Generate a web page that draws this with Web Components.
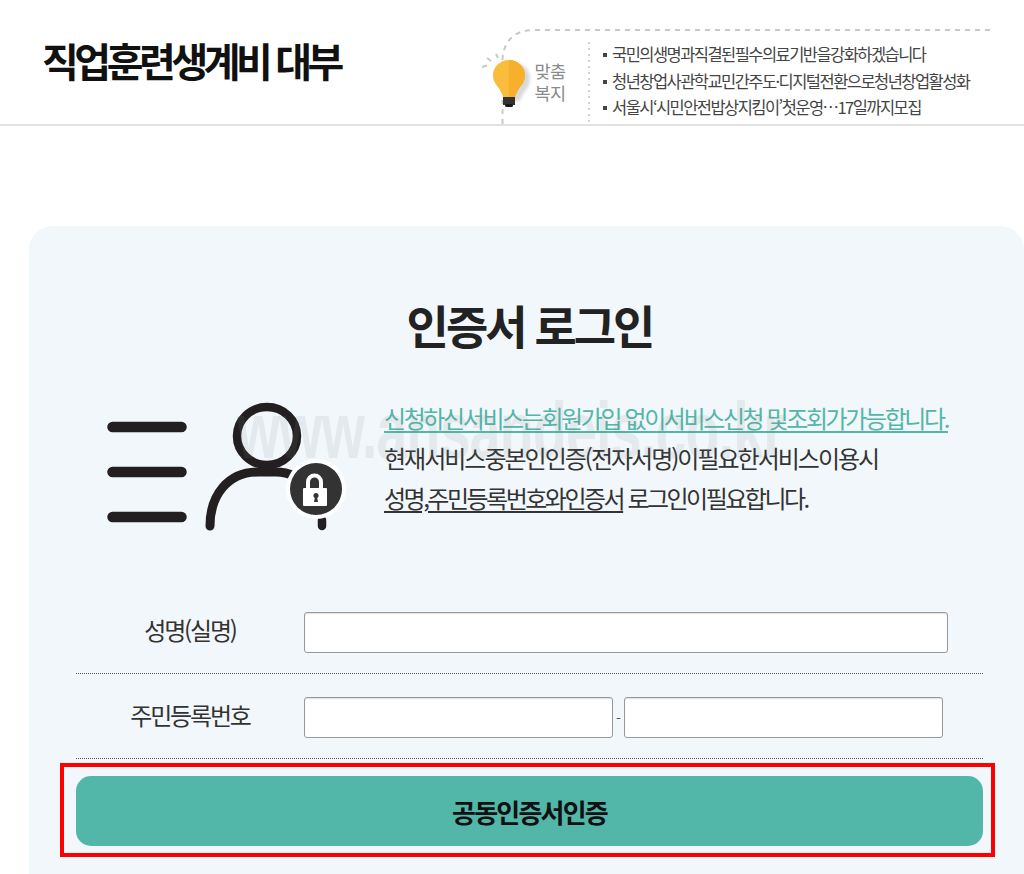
<!DOCTYPE html>
<html lang="ko"><head><meta charset="utf-8"><title>인증서 로그인</title>
<style>
html,body{margin:0;padding:0;background:#fff}
body{font-family:"Noto Sans CJK KR","Noto Sans",sans-serif;color:#222;height:874px;overflow:hidden}
</style></head><body>
<site-header>
  <promo-list slot="promo">
    <li>국민의생명과직결된필수의료기반을강화하겠습니다</li>
    <li>청년창업사관학교민간주도·디지털전환으로청년창업활성화</li>
    <li>서울시‘시민안전밥상지킴이’첫운영…17일까지모집</li>
  </promo-list>
</site-header>
<login-card></login-card>
<script>
const def=(name,html)=>customElements.define(name,class extends HTMLElement{
  constructor(){super();this.attachShadow({mode:'open'}).innerHTML=html}
});
def('site-header',`<style>
:host{display:flex;height:124px;border-bottom:2px solid #e2e2e2;overflow:hidden}
h1{margin:0;padding:34px 0 0 42px;width:478px;flex:none;box-sizing:border-box;font-size:40px;line-height:52px;font-weight:700;letter-spacing:-4.45px;color:#111;white-space:nowrap}
.slot{flex:1;display:flex}
</style><h1>직업훈련생계비 대부</h1><div class="slot"><slot name="promo"></slot></div>`);
def('promo-list',`<style>
:host{display:flex;flex:1;position:relative;align-items:flex-start}
svg{display:block;position:absolute;left:0;top:0}
.lab{margin:60px 0 0 55px;width:34px;flex:none;text-align:center;font-size:17.5px;line-height:22px;color:#8a8a8a;letter-spacing:-.6px;position:relative}
.list{margin:41px 0 0 36px;padding:0;font-size:16.5px;line-height:26.5px;letter-spacing:-1.55px;color:#444;white-space:nowrap;position:relative}
::slotted(li){list-style:none;padding-left:9px;position:relative}
::slotted(li)::before{content:"";position:absolute;left:0;top:12px;width:4px;height:4px;background:#444}
</style>
<svg width="546" height="124" viewBox="0 0 546 124" fill="none">
<defs><filter id="b" x="-30%" y="-30%" width="160%" height="160%"><feGaussianBlur stdDeviation="1.5"/></filter></defs>
<path d="M24.500 124V100M24.500 60C25 44 34 30 56 30H512" stroke="#c9c9c9" stroke-width="2" stroke-dasharray="5 5"/>
<path d="M111 42V124" stroke="#d2d2d2" stroke-width="2" stroke-dasharray="2 4"/>
<path d="M4 67l5-1.500M9 58l4 3M18 54l2 4" stroke="#c8c8c8" stroke-width="2"/>
<path d="M35 62c-9 0-16 6-16 15 0 5 2 9 5 12 2 3 4 6 5 10h10c1-4 3-7 5-10 3-3 5-7 5-12 0-9-5-15-14-15z" fill="#bbb" opacity=".55" filter="url(#b)" transform="translate(3 2)"/>
<path d="M31 60c-9 0-16 7-16 15 0 5 2 9 5 12 2 3 4 6 5 10h12c1-4 3-7 5-10 3-3 5-7 5-12 0-8-7-15-16-15z" fill="#f9bc3c"/>
<path d="M31 60c9 0 16 7 16 15 0 5-2 9-5 12-2 3-4 6-5 10h-6z" fill="#f6b02c"/>
<rect x="25" y="97" width="12" height="8" fill="#333"/><rect x="27" y="104" width="8" height="3" rx="1.500" fill="#1a1a1a"/>
</svg>
<div class="lab">맞춤<br>복지</div>
<ul class="list"><slot></slot></ul>`);
def('form-row',`<style>
:host{display:flex;align-items:center;height:85px;box-sizing:border-box;border-bottom:1px dotted #555;padding-top:3px}
.lab{width:228px;text-align:center;flex:none;font-size:24px;letter-spacing:-2.2px;color:#333;box-sizing:border-box;padding-bottom:6px}
.f{display:flex;align-items:center;flex:1}
</style><div class="lab"><slot name="label"></slot></div><div class="f"><slot></slot></div>`);
def('text-box',`<style>
:host{display:block;height:41px;background:#fff;border:1px solid #999;border-radius:3px;box-sizing:border-box;box-shadow:inset 0 1px 1px rgba(0,0,0,.12)}
</style>`);
def('lock-figure',`<style>:host{display:block;flex:none;width:308px;height:150px}svg{display:block}</style>
<svg width="308" height="150" viewBox="0 0 308 150" fill="none">
<g stroke="#231f20" stroke-linecap="round">
<path d="M36.500 35H105.500M36.500 80H105.500M36.500 125H105.500" stroke-width="10.500"/>
<ellipse cx="191" cy="44" rx="30" ry="29" stroke-width="8.500"/>
<path d="M134 134C134 103 152 80 182 80H200C207 80 212 81 218 84" stroke-width="9"/>
<path d="M246 128V134" stroke-width="8.500"/>
</g>
<circle cx="240" cy="97" r="30" fill="#fff"/>
<circle cx="240" cy="97" r="26" fill="#333"/>
<path d="M232 97V90a6.500 6.500 0 0 1 13 0v7" stroke="#fff" stroke-width="4"/>
<rect x="227" y="96" width="24" height="18" rx="1" fill="#fff"/>
<path d="M238 110l.8-4a2.600 2.600 0 1 1 2.400 0l.8 4z" fill="#333"/>
</svg>`);
def('login-card',`<style>
:host{display:block;position:relative;margin:100px 0 0 29px;background:#f2f7fb;border-radius:24px 24px 0 0;padding:64px 41px 0 47px;height:648px;box-sizing:border-box}
h2{margin:0;text-align:center;font-size:46px;line-height:68px;font-weight:700;letter-spacing:-3px;color:#222}
.intro{display:flex;margin:34px 0 0 0;height:197px}
.msg{font-size:24px;line-height:40px;letter-spacing:-2.4px;color:#333;white-space:nowrap;margin:0;padding-top:6px}
.msg u{text-underline-offset:3px}
.msg .g{color:#52b6a8}
.l2{letter-spacing:-2px}.l3{letter-spacing:-2.5px}
.gap{width:11px;text-align:center;font-size:14px;line-height:1;flex:none;color:#555}
.w1{width:644px}.w2{width:309px}.w3{width:319px}
.hl{margin:4px -12px 0 -16px;border:4px solid #f00;padding:9px 8px 7px 12px;height:94px;box-sizing:border-box}
button{display:block;width:100%;height:70px;border:0;border-radius:15px;background:#52b6a8;font:700 26px "Noto Sans CJK KR",sans-serif;letter-spacing:-1.8px;color:#111;padding:0}
.wm{position:absolute;left:208px;top:165px;font:700 79px/80px "Liberation Sans",sans-serif;letter-spacing:-1px;color:rgba(120,130,130,.12);white-space:nowrap;pointer-events:none;transform:scaleX(.7);transform-origin:0 0}
</style>
<h2>인증서 로그인</h2>
<div class="intro"><lock-figure></lock-figure>
<p class="msg"><u class="g">신청하신서비스는회원가입 없이서비스신청 및조회가가능합니다.</u><br><span class="l2">현재서비스중본인인증(전자서명)이필요한서비스이용시</span><br><span class="l3"><u>성명,주민등록번호와인증서</u> 로그인이필요합니다.</span></p></div>
<div class="form">
<form-row><span slot="label">성명(실명)</span><text-box class="w1"></text-box></form-row>
<form-row><span slot="label">주민등록번호</span><text-box class="w2"></text-box><span class="gap">-</span><text-box class="w3"></text-box></form-row>
</div>
<div class="hl"><button>공동인증서인증</button></div>
<div class="wm">www.ansandeis.co.kr</div>`);
</script>
</body></html>
